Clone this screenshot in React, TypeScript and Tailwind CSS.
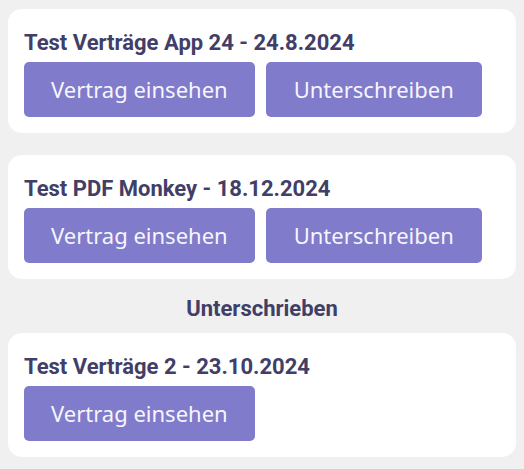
const contracts = [
  { title: "Test Verträge App 24 - 24.8.2024", signed: false },
  { title: "Test PDF Monkey - 18.12.2024", signed: false },
];

const signedContracts = [{ title: "Test Verträge 2 - 23.10.2024" }];

function ContractCard({ title, canSign }: { title: string; canSign: boolean }) {
  return (
    <div className="bg-white rounded-[14px] px-4 pt-[20px] pb-4">
      <h2 className="font-['Roboto',sans-serif] font-bold text-[22px] leading-[28px] text-[#413e67] mb-[5px]">
        {title}
      </h2>
      <div className="flex gap-[11px]">
        <button className="h-[55px] px-[27px] rounded-[5px] bg-[#817bcb] text-[#f6f5fc] font-['Noto_Sans',sans-serif] text-[22px]">
          Vertrag einsehen
        </button>
        {canSign && (
          <button className="h-[55px] px-[28px] rounded-[5px] bg-[#817bcb] text-[#f6f5fc] font-['Noto_Sans',sans-serif] text-[22px]">
            Unterschreiben
          </button>
        )}
      </div>
    </div>
  );
}

export default function App() {
  return (
    <div className="min-h-[469px] bg-[#f0f0f0] px-[8px] pt-[9px] pb-3">
      <div className="w-[508px] flex flex-col gap-[22px]">
        {contracts.map((c) => (
          <ContractCard key={c.title} title={c.title} canSign={!c.signed} />
        ))}
      </div>

      <h3 className="w-[508px] text-center font-['Roboto',sans-serif] font-bold text-[22px] leading-[28px] text-[#413e67] mt-[16px] mb-[10px]">
        Unterschrieben
      </h3>

      <div className="w-[508px] flex flex-col gap-[22px]">
        {signedContracts.map((c) => (
          <ContractCard key={c.title} title={c.title} canSign={false} />
        ))}
      </div>
    </div>
  );
}
